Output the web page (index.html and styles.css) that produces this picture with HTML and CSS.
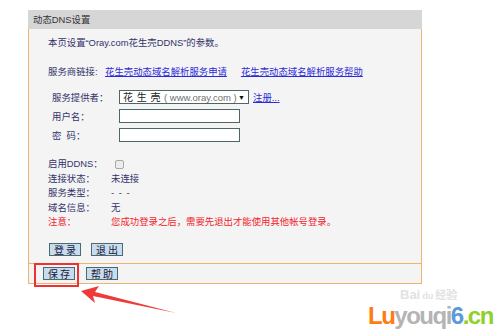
FILE: index.html
```html
<!DOCTYPE html>
<html lang="zh-CN">
<head>
<meta charset="UTF-8" />
<title>动态DNS设置</title>
<link rel="stylesheet" href="styles.css">
</head>
<body>
  <div class="panel">
    <div class="panel-head">动态DNS设置</div>
    <div class="panel-body">
      <div class="main">
        <div class="line intro">本页设置“Oray.com花生壳DDNS”的参数。</div>
        <div class="line links">
          <span class="llabel">服务商链接:</span>
          <a href="#" class="link">花生壳动态域名解析服务申请</a>
          <a href="#" class="link second">花生壳动态域名解析服务帮助</a>
        </div>

        <div class="form">
          <div class="frow">
            <span class="flabel">服务提供者：</span>
            <div class="select"><span class="cn">花 生 壳</span><span class="en">( www.oray.com )</span><span class="caret">▼</span></div>
            <a href="#" class="link reg">注册...</a>
          </div>
          <div class="frow">
            <span class="flabel">用户名：</span>
            <div class="input"></div>
          </div>
          <div class="frow">
            <span class="flabel">密&nbsp;&nbsp;码：</span>
            <div class="input"></div>
          </div>
        </div>

        <div class="status">
          <div class="srow"><span class="slabel">启用DDNS：</span><span class="check"></span></div>
          <div class="srow"><span class="slabel">连接状态：</span><span>未连接</span></div>
          <div class="srow"><span class="slabel">服务类型：</span><span class="dash">- - -</span></div>
          <div class="srow"><span class="slabel">域名信息：</span><span>无</span></div>
          <div class="srow warn"><span class="slabel">注意：</span><span>您成功登录之后，需要先退出才能使用其他帐号登录。</span></div>
        </div>

        <div class="btns">
          <button class="btn">登 录</button>
          <button class="btn">退 出</button>
        </div>
      </div>
      <div class="foot">
        <button class="btn">保 存</button>
        <button class="btn">帮 助</button>
      </div>
    </div>
  </div>

  <div class="mark"></div>
  <svg class="arrow" width="120" height="40" viewBox="70 280 120 40">
    <polygon points="81,291 99,286 95,292 176,313 93,296 95,303" fill="#f03a3a"/>
  </svg>

  <div class="watermark">
    <div class="baidu"><span>Bai</span><span class="paw">du</span><span class="jy">经验</span></div>
    <div class="site"><span class="o">Lu</span><span class="g">youqi</span><span class="b">6</span><span class="gr">.cn</span></div>
  </div>
</body>
</html>
```

FILE: styles.css
```css
* {
  box-sizing: border-box;
}
body {
  margin: 0;
  padding: 10px 0 0 28px;
  background: #fff;
  font-family: "Liberation Sans", "Noto Sans CJK SC", sans-serif;
  font-size: 9.4px;
  color: #33336a;
  width: 500px;
  height: 333px;
  overflow: hidden;
  position: relative;
}
.panel {
  width: 394px;
}
.panel-head {
  height: 19px;
  line-height: 19px;
  background: #d6d6d6;
  color: #333;
  padding-left: 5px;
}
.panel-body {
  background: #f4f4f4;
  border: 1px solid #eeb271;
  border-top: none;
}
.main {
  padding: 7px 0 7px 19px;
  border-bottom: 1px solid #eeb271;
}
.line {
  height: 14px;
  line-height: 14px;
  white-space: nowrap;
}
.links {
  margin-top: 15px;
  display: flex;
}
.llabel {
  width: 57px;
}
.link {
  color: #2a2ad8;
  text-decoration: underline;
}
.links .second {
  margin-left: 14px;
}

.form {
  margin-top: 11px;
  padding-left: 4px;
  display: flex;
  flex-direction: column;
  gap: 5px;
}
.frow {
  display: flex;
  align-items: center;
  height: 14px;
}
.flabel {
  width: 67px;
}
.select {
  width: 130px;
  height: 14px;
  border: 1.5px solid #4d6767;
  background: #fff;
  display: flex;
  align-items: center;
  padding-left: 3px;
  color: #222;
  line-height: 11px;
  font-size: 10px;
  white-space: nowrap;
}
.select span {
  flex-shrink: 0;
}
.select .cn {
  letter-spacing: 0.5px;
}
.select .en {
  color: #707070;
  margin-left: 3px;
  font-size: 9.5px;
}
.select .caret {
  margin-left: auto;
  margin-right: 3px;
  font-size: 7px;
  color: #111;
}
.reg {
  margin-left: 4px;
}
.input {
  width: 121px;
  height: 14px;
  border: 1.5px solid #4d6767;
  background: #fff;
}

.status {
  margin-top: 15px;
}
.srow {
  display: flex;
  align-items: center;
  height: 14.5px;
  line-height: 14.5px;
  white-space: nowrap;
}
.slabel {
  width: 63px;
}
.check {
  width: 9px;
  height: 9px;
  margin-left: 4px;
  border: 1px solid #a8a8a8;
  border-radius: 2px;
  background: #ececec;
}
.dash {
  letter-spacing: 1px;
}
.warn {
  color: #f2232c;
}

.btns {
  margin-top: 13px;
  padding-left: 1px;
  display: flex;
  gap: 10px;
}
.btn {
  width: 32px;
  height: 13px;
  padding: 0;
  border: 1px solid #486a70;
  background: #c8dcee;
  color: #1a1a3a;
  font-family: "Noto Sans CJK SC", sans-serif;
  font-size: 10px;
  line-height: 11px;
}
.foot {
  padding: 3px 0 3px 14px;
  display: flex;
  gap: 11px;
}

.mark {
  position: absolute;
  left: 34px;
  top: 263px;
  width: 45px;
  height: 24px;
  border: 2px solid #ee3232;
}
.arrow {
  position: absolute;
  left: 70px;
  top: 280px;
  width: 120px;
  height: 40px;
}

.watermark {
  position: absolute;
  left: 368px;
  top: 288px;
}
.baidu {
  margin-left: 32px;
  height: 13px;
  color: #e2e2e2;
  font-size: 13px;
  font-weight: bold;
  line-height: 13px;
  white-space: nowrap;
}
.baidu .paw {
  font-size: 9px;
  margin: 0 2px;
}
.baidu .jy {
  font-family: "Noto Sans CJK SC", sans-serif;
  font-size: 11px;
}
.site {
  font-weight: bold;
  font-size: 24px;
  line-height: 22px;
  letter-spacing: -1.5px;
  white-space: nowrap;
  margin-top: 4px;
}
.site .o { color: #ff7d10; }
.site .g { color: #b4b4b4; }
.site .b { color: #5b9ad8; }
.site .gr { color: #8fd02a; }
```
